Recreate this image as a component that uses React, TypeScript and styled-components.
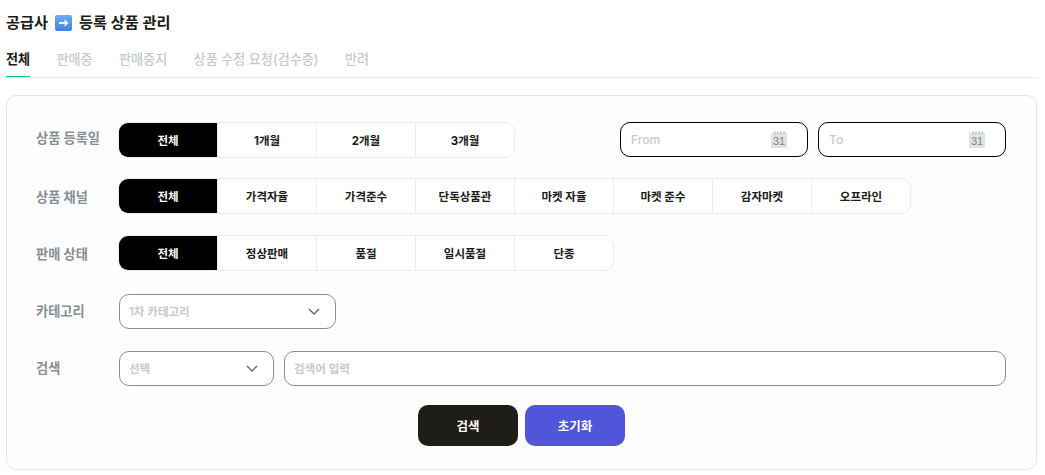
import styled, { createGlobalStyle } from "styled-components";

const GlobalStyle = createGlobalStyle`
  * {
    box-sizing: border-box;
  }
  body {
    margin: 0;
    background: #fff;
    font-family: Inter, "Noto Sans CJK KR", sans-serif;
  }
`;

const Page = styled.div`
  width: 1045px;
  height: 475px;
  padding: 0 8px 0 6px;
  overflow: hidden;
`;

const Title = styled.h1`
  display: flex;
  align-items: center;
  gap: 7px;
  height: 20px;
  margin: 13px 0 0;
  font-size: 15.2px;
  line-height: 20px;
  font-weight: 600;
  color: #1a1a1a;
`;

const Tabs = styled.div`
  display: flex;
  gap: 26.4px;
  height: 33px;
  margin-top: 12px;
  border-bottom: 1px solid #e8e9ea;
`;

const Tab = styled.div<{ $active?: boolean }>`
  height: 32px;
  padding: 4px 0 0;
  font-size: 13.1px;
  line-height: 20px;
  font-weight: ${(p) => (p.$active ? 600 : 500)};
  color: ${(p) => (p.$active ? "#1a1a1a" : "#c6c9cc")};
  border-bottom: ${(p) => (p.$active ? "1px solid #00bfa5" : "none")};
`;

const Panel = styled.div`
  height: 375px;
  margin-top: 17px;
  padding: 26px 30px 0 29px;
  background: #fdfdfd;
  border: 1px solid #e4e5e6;
  border-radius: 10px;
`;

const Row = styled.div<{ $top?: number }>`
  display: flex;
  align-items: center;
  margin-top: ${(p) => p.$top ?? 0}px;
`;

const Label = styled.div<{ $nudge?: number }>`
  width: 83px;
  flex: none;
  font-size: 13.2px;
  font-weight: 600;
  color: #868e96;
  transform: translateY(${(p) => p.$nudge ?? 0}px);
`;

const Segments = styled.div`
  display: flex;
  height: 36px;
  margin-left: -1px;
  background: #fff;
  border: 1px solid #e9ecef;
  border-radius: 10px;
  overflow: hidden;
`;

const Segment = styled.div<{ $active?: boolean }>`
  display: flex;
  align-items: center;
  justify-content: center;
  width: 99px;
  font-size: 11.5px;
  font-weight: 700;
  color: ${(p) => (p.$active ? "#fff" : "#1a1a1a")};
  background: ${(p) => (p.$active ? "#000" : "#fff")};
  border-left: 1px solid #e9ecef;

  &:first-child {
    width: 98px;
    border-left: none;
  }
`;

const DateGroup = styled.div`
  display: flex;
  align-self: flex-start;
  gap: 10px;
  margin-left: auto;
`;

const DateBox = styled.div`
  display: flex;
  align-items: center;
  justify-content: space-between;
  width: 188px;
  height: 35px;
  padding: 0 20px 0 10px;
  background: #fff;
  border: 1px solid #000;
  border-radius: 10px;
  font-size: 12px;
  font-weight: 500;
  color: #c6c9cc;
`;

const Field = styled.div<{ $width?: number }>`
  display: flex;
  align-items: center;
  justify-content: space-between;
  flex: ${(p) => (p.$width ? "none" : "1")};
  width: ${(p) => (p.$width ? `${p.$width}px` : "auto")};
  height: 35px;
  padding: 0 15px 0 9px;
  background: #fff;
  border: 1px solid #868e96;
  border-radius: 10px;
  font-size: 11.5px;
  font-weight: 600;
  color: #c6c9cc;
`;

const Placeholder = styled.span`
  margin-top: -2px;
`;

const SearchField = styled(Field)`
  margin-left: 10px;
`;

const Actions = styled.div`
  display: flex;
  justify-content: center;
  gap: 7px;
  margin-top: 19px;
  padding-left: 1px;
`;

const Button = styled.button<{ $color: string }>`
  width: 100px;
  height: 41px;
  border: none;
  border-radius: 10px;
  background: ${(p) => p.$color};
  color: #fff;
  font-family: inherit;
  font-size: 12.5px;
  font-weight: 700;
`;

const ArrowEmoji = () => (
  <svg width="17" height="16" viewBox="0 0 17 16">
    <defs>
      <linearGradient id="arrowBg" x1="0" y1="0" x2="0" y2="1">
        <stop offset="0" stopColor="#6fabef" />
        <stop offset="1" stopColor="#3f82e2" />
      </linearGradient>
    </defs>
    <rect width="17" height="16" rx="2" fill="url(#arrowBg)" />
    <path d="M4 7h5.6V4.2L13.6 8l-4 3.8V9H4z" fill="#fff" />
  </svg>
);

const CalendarIcon = () => (
  <svg width="16" height="17" viewBox="0 0 16 17">
    <rect y="2" width="16" height="15" fill="#dfe2e5" />
    <path d="M4 0.5v2.5M7 0.5v2.5M10 0.5v2.5M13 0.5v2.5" stroke="#9aa0a5" strokeWidth="1" />
    <text x="8" y="13.5" fontSize="11" textAnchor="middle" fill="#7d8388" fontFamily="Liberation Sans, sans-serif">
      31
    </text>
  </svg>
);

const Chevron = () => (
  <svg width="12" height="7" viewBox="0 0 12 7" fill="none">
    <path d="M1 1l5 5 5-5" stroke="#5f666c" strokeWidth="1.3" />
  </svg>
);

const tabs = ["전체", "판매중", "판매중지", "상품 수정 요청(검수중)", "반려"];
const periods = ["전체", "1개월", "2개월", "3개월"];
const channels = ["전체", "가격자율", "가격준수", "단독상품관", "마켓 자율", "마켓 준수", "감자마켓", "오프라인"];
const states = ["전체", "정상판매", "품절", "일시품절", "단종"];

const SegmentList = ({ items }: { items: string[] }) => (
  <Segments>
    {items.map((item, i) => (
      <Segment key={item} $active={i === 0}>
        {item}
      </Segment>
    ))}
  </Segments>
);

export default function App() {
  return (
    <Page>
      <GlobalStyle />
      <Title>
        공급사 <ArrowEmoji /> 등록 상품 관리
      </Title>
      <Tabs>
        {tabs.map((tab, i) => (
          <Tab key={tab} $active={i === 0}>
            {tab}
          </Tab>
        ))}
      </Tabs>
      <Panel>
        <Row>
          <Label $nudge={-3}>상품 등록일</Label>
          <SegmentList items={periods} />
          <DateGroup>
            <DateBox>
              From <CalendarIcon />
            </DateBox>
            <DateBox>
              To <CalendarIcon />
            </DateBox>
          </DateGroup>
        </Row>
        <Row $top={20}>
          <Label>상품 채널</Label>
          <SegmentList items={channels} />
        </Row>
        <Row $top={21}>
          <Label>판매 상태</Label>
          <SegmentList items={states} />
        </Row>
        <Row $top={23}>
          <Label $nudge={-1}>카테고리</Label>
          <Field $width={217}>
            <Placeholder>1차 카테고리</Placeholder> <Chevron />
          </Field>
        </Row>
        <Row $top={22}>
          <Label $nudge={-1}>검색</Label>
          <Field $width={155}>
            <Placeholder>선택</Placeholder> <Chevron />
          </Field>
          <SearchField>
            <Placeholder>검색어 입력</Placeholder>
          </SearchField>
        </Row>
        <Actions>
          <Button $color="#1f1d18">검색</Button>
          <Button $color="#5055db">초기화</Button>
        </Actions>
      </Panel>
    </Page>
  );
}
